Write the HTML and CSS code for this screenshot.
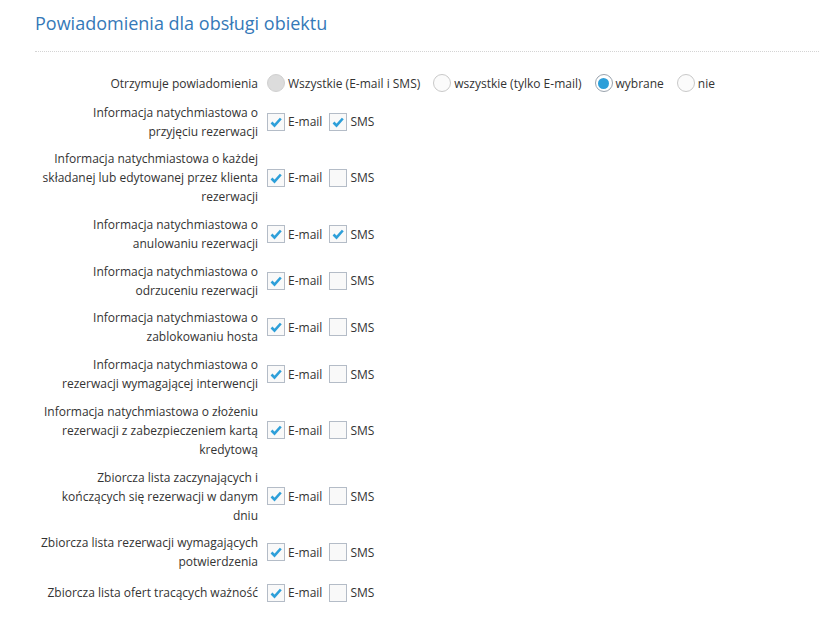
FILE: index.html
```html
<!DOCTYPE html>
<html lang="pl">
<head>
<meta charset="utf-8">
<link rel="stylesheet" href="styles.css">
</head>
<body>
<div class="page">
  <h2 class="title">Powiadomienia dla obsługi obiektu</h2>
  <div class="divider"></div>
  <div class="form">
    <div class="row radios">
      <div class="label">Otrzymuje powiadomienia</div>
      <div class="controls">
        <span class="opt"><span class="radio disabled"></span>Wszystkie (E-mail i SMS)</span>
        <span class="opt"><span class="radio"></span>wszystkie (tylko E-mail)</span>
        <span class="opt"><span class="radio checked"></span>wybrane</span>
        <span class="opt"><span class="radio"></span>nie</span>
      </div>
    </div>
    <div class="row">
      <div class="label">Informacja natychmiastowa o<br>przyjęciu rezerwacji</div>
      <div class="controls">
        <span class="opt"><span class="cb on"><svg viewBox="0 0 16 16"><path d="M3.5 8.5 L6.5 11.5 L12.8 4.5"/></svg></span>E-mail</span>
        <span class="opt"><span class="cb on"><svg viewBox="0 0 16 16"><path d="M3.5 8.5 L6.5 11.5 L12.8 4.5"/></svg></span>SMS</span>
      </div>
    </div>
    <div class="row">
      <div class="label">Informacja natychmiastowa o każdej<br>składanej lub edytowanej przez klienta<br>rezerwacji</div>
      <div class="controls">
        <span class="opt"><span class="cb on"><svg viewBox="0 0 16 16"><path d="M3.5 8.5 L6.5 11.5 L12.8 4.5"/></svg></span>E-mail</span>
        <span class="opt"><span class="cb"></span>SMS</span>
      </div>
    </div>
    <div class="row">
      <div class="label">Informacja natychmiastowa o<br>anulowaniu rezerwacji</div>
      <div class="controls">
        <span class="opt"><span class="cb on"><svg viewBox="0 0 16 16"><path d="M3.5 8.5 L6.5 11.5 L12.8 4.5"/></svg></span>E-mail</span>
        <span class="opt"><span class="cb on"><svg viewBox="0 0 16 16"><path d="M3.5 8.5 L6.5 11.5 L12.8 4.5"/></svg></span>SMS</span>
      </div>
    </div>
    <div class="row">
      <div class="label">Informacja natychmiastowa o<br>odrzuceniu rezerwacji</div>
      <div class="controls">
        <span class="opt"><span class="cb on"><svg viewBox="0 0 16 16"><path d="M3.5 8.5 L6.5 11.5 L12.8 4.5"/></svg></span>E-mail</span>
        <span class="opt"><span class="cb"></span>SMS</span>
      </div>
    </div>
    <div class="row">
      <div class="label">Informacja natychmiastowa o<br>zablokowaniu hosta</div>
      <div class="controls">
        <span class="opt"><span class="cb on"><svg viewBox="0 0 16 16"><path d="M3.5 8.5 L6.5 11.5 L12.8 4.5"/></svg></span>E-mail</span>
        <span class="opt"><span class="cb"></span>SMS</span>
      </div>
    </div>
    <div class="row">
      <div class="label">Informacja natychmiastowa o<br>rezerwacji wymagającej interwencji</div>
      <div class="controls">
        <span class="opt"><span class="cb on"><svg viewBox="0 0 16 16"><path d="M3.5 8.5 L6.5 11.5 L12.8 4.5"/></svg></span>E-mail</span>
        <span class="opt"><span class="cb"></span>SMS</span>
      </div>
    </div>
    <div class="row">
      <div class="label">Informacja natychmiastowa o złożeniu<br>rezerwacji z zabezpieczeniem kartą<br>kredytową</div>
      <div class="controls">
        <span class="opt"><span class="cb on"><svg viewBox="0 0 16 16"><path d="M3.5 8.5 L6.5 11.5 L12.8 4.5"/></svg></span>E-mail</span>
        <span class="opt"><span class="cb"></span>SMS</span>
      </div>
    </div>
    <div class="row">
      <div class="label">Zbiorcza lista zaczynających i<br>kończących się rezerwacji w danym<br>dniu</div>
      <div class="controls">
        <span class="opt"><span class="cb on"><svg viewBox="0 0 16 16"><path d="M3.5 8.5 L6.5 11.5 L12.8 4.5"/></svg></span>E-mail</span>
        <span class="opt"><span class="cb"></span>SMS</span>
      </div>
    </div>
    <div class="row">
      <div class="label">Zbiorcza lista rezerwacji wymagających<br>potwierdzenia</div>
      <div class="controls">
        <span class="opt"><span class="cb on"><svg viewBox="0 0 16 16"><path d="M3.5 8.5 L6.5 11.5 L12.8 4.5"/></svg></span>E-mail</span>
        <span class="opt"><span class="cb"></span>SMS</span>
      </div>
    </div>
    <div class="row last">
      <div class="label">Zbiorcza lista ofert tracących ważność</div>
      <div class="controls">
        <span class="opt"><span class="cb on"><svg viewBox="0 0 16 16"><path d="M3.5 8.5 L6.5 11.5 L12.8 4.5"/></svg></span>E-mail</span>
        <span class="opt"><span class="cb"></span>SMS</span>
      </div>
    </div>
  </div>
</div>
</body>
</html>
```

FILE: styles.css
```css
html, body {
  margin: 0;
  padding: 0;
  background: #fff;
}
body {
  font-family: "Open Sans", "DejaVu Sans", sans-serif;
  font-size: 12px;
  color: #333;
}
.page {
  padding: 10px 0 0 35px;
}
.title {
  margin: 0;
  font-size: 18px;
  font-weight: 400;
  line-height: 26px;
  color: #3579b8;
}
.divider {
  margin-top: 15px;
  border-top: 1px dotted #d4d4d4;
}
.form {
  padding-top: 20px;
}
.row {
  display: flex;
  align-items: center;
  margin-bottom: 8.7px;
}
.row.radios {
  min-height: 22px;
}
.row.last {
  min-height: 26px;
}
.label {
  width: 223px;
  text-align: right;
  line-height: 19px;
  flex: none;
}
.controls {
  display: flex;
  align-items: center;
  margin-left: 9px;
  gap: 7px;
}
.row.radios .controls {
  gap: 13px;
}
.opt {
  display: inline-flex;
  align-items: center;
  line-height: 19px;
}
.radio {
  width: 16px;
  height: 16px;
  border: 1px solid #c9c9c9;
  border-radius: 50%;
  background: #fbfbfb;
  margin-right: 3px;
  box-sizing: content-box;
  position: relative;
}
.radio.disabled {
  background: #dcdcdc;
  border-color: #d0d0d0;
}
.radio.checked {
  border-color: #9aa3ad;
  background: #fff;
}
.radio.checked::after {
  content: "";
  position: absolute;
  left: 2.5px;
  top: 2.5px;
  width: 11px;
  height: 11px;
  border-radius: 50%;
  background: #2d9fd9;
}
.cb {
  width: 16px;
  height: 16px;
  border: 1px solid #b4bcc7;
  background: #f9f9f9;
  margin-right: 3px;
  box-sizing: content-box;
  display: block;
}
.cb svg {
  display: block;
  width: 16px;
  height: 16px;
}
.cb svg path {
  fill: none;
  stroke: #2d9fd9;
  stroke-width: 2.6;
  stroke-linecap: butt;
  stroke-linejoin: miter;
}
```
